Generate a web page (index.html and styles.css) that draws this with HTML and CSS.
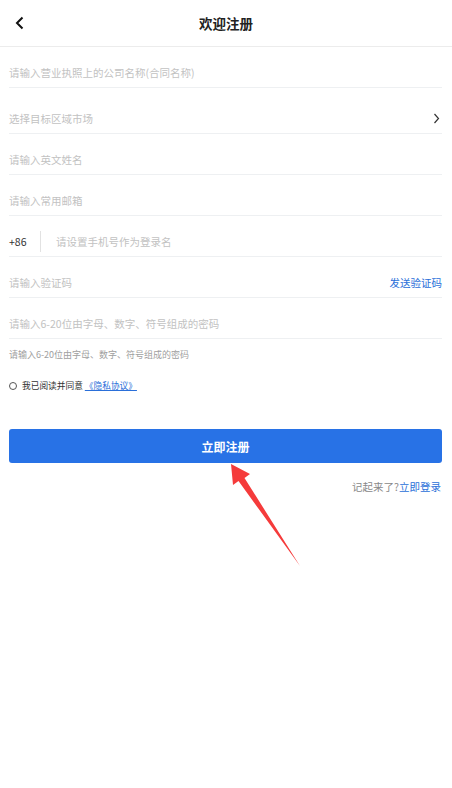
FILE: index.html
```html
<!DOCTYPE html>
<html lang="zh-CN">
<head>
    <meta charset="UTF-8">
    <meta name="viewport" content="width=device-width, initial-scale=1.0">
    <title>欢迎注册</title>
    <link rel="stylesheet" href="styles.css">
</head>
<body>
    <div class="header">
        <span class="back">
            <svg width="10" height="14" viewBox="0 0 10 14"><path d="M7.5 1.5 L2 7 L7.5 12.5" fill="none" stroke="#111" stroke-width="2"/></svg>
        </span>
        <h1>欢迎注册</h1>
    </div>

    <div class="form">
        <div class="row"><span class="ph">请输入营业执照上的公司名称(合同名称)</span></div>
        <div class="row row-select">
            <span class="ph">选择目标区域市场</span>
            <svg class="arrow-right" width="7" height="11" viewBox="0 0 7 11"><path d="M1.5 1 L5.5 5.5 L1.5 10" fill="none" stroke="#333" stroke-width="1.2"/></svg>
        </div>
        <div class="row"><span class="ph">请输入英文姓名</span></div>
        <div class="row"><span class="ph">请输入常用邮箱</span></div>
        <div class="row">
            <span class="code">+86</span>
            <span class="divider"></span>
            <span class="ph">请设置手机号作为登录名</span>
        </div>
        <div class="row">
            <span class="ph">请输入验证码</span>
            <span class="send">发送验证码</span>
        </div>
        <div class="row"><span class="ph">请输入6-20位由字母、数字、符号组成的密码</span></div>

        <p class="hint">请输入6-20位由字母、数字、符号组成的密码</p>

        <div class="agree">
            <span class="radio"></span>
            <span>我已阅读并同意</span>
            <a class="link" href="#">《隐私协议》</a>
        </div>

        <button class="btn-primary">立即注册</button>

        <p class="login">记起来了?<a href="#">立即登录</a></p>
    </div>

    <svg class="pointer" width="452" height="788" viewBox="0 0 452 788">
        <polygon points="231,464 250,474 244.5,478 300,566 238.5,481 233,485" fill="#f53b3b"/>
    </svg>
</body>
</html>
```

FILE: styles.css
```css
* {
    box-sizing: border-box;
}
body {
    margin: 0;
    background: #fff;
    font-family: "Noto Sans CJK SC", "Noto Sans", sans-serif;
    color: #222;
    position: relative;
    min-height: 788px;
}
.header {
    height: 47px;
    border-bottom: 1px solid #ececec;
    display: flex;
    align-items: center;
    justify-content: center;
    position: relative;
}
.header h1 {
    margin: 0;
    font-size: 13.5px;
    font-weight: bold;
    color: #222;
}
.back {
    position: absolute;
    left: 15px;
    top: 16px;
}
.back svg {
    display: block;
}
.form {
    padding: 0 10px 0 9px;
}
.row {
    height: 41px;
    padding-top: 11px;
    border-bottom: 1px solid #eef0f2;
    display: flex;
    align-items: center;
    font-size: 10.5px;
}
.row-select {
    height: 46px;
    padding-top: 16px;
}
.ph {
    color: #c2c2c2;
}
.arrow-right {
    margin-left: auto;
    margin-right: 2px;
}
.code {
    color: #333;
    width: 31px;
}
.divider {
    width: 1px;
    height: 21px;
    background: #e2e2e2;
    margin-right: 15px;
}
.send {
    margin-left: auto;
    color: #2a6fd9;
}
.hint {
    margin: 9px 0 0;
    font-size: 9px;
    color: #a0a0a0;
}
.agree {
    margin-top: 18px;
    display: flex;
    align-items: center;
    font-size: 8.7px;
    color: #333;
}
.radio {
    width: 8px;
    height: 8px;
    border: 1px solid #555;
    border-radius: 50%;
    margin-right: 5px;
}
.link {
    color: #2a6fd9;
    margin-left: 2px;
}
.btn-primary {
    display: block;
    width: 100%;
    height: 34px;
    margin-top: 37px;
    border: none;
    border-radius: 3px;
    background: #2872e6;
    color: #fff;
    font-family: inherit;
    font-size: 12px;
    font-weight: bold;
}
.login {
    margin: 16px 1px 0 0;
    text-align: right;
    font-size: 10.5px;
    color: #888;
}
.login a {
    color: #2a6fd9;
    text-decoration: none;
}
.pointer {
    position: absolute;
    left: 0;
    top: 0;
    pointer-events: none;
}
```
